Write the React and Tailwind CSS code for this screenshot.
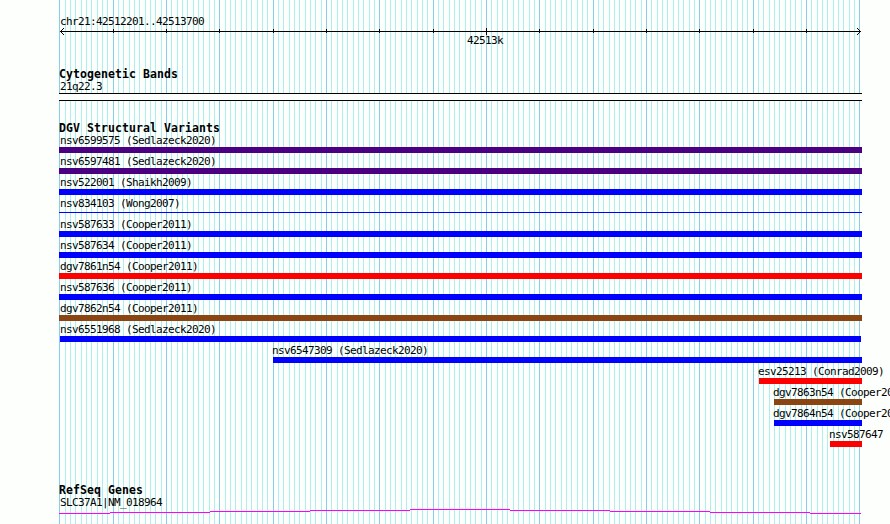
import React from "react";

const variants = [
  { label: "nsv6599575 (Sedlazeck2020)", start: 59, end: 862, color: "bg-[#4b0082]" },
  { label: "nsv6597481 (Sedlazeck2020)", start: 59, end: 862, color: "bg-[#4b0082]" },
  { label: "nsv522001 (Shaikh2009)", start: 59, end: 862, color: "bg-[#0000ff]" },
  { label: "nsv834103 (Wong2007)", start: 59, end: 862, color: "bg-[#0000ff]", thin: true },
  { label: "nsv587633 (Cooper2011)", start: 59, end: 862, color: "bg-[#0000ff]" },
  { label: "nsv587634 (Cooper2011)", start: 59, end: 862, color: "bg-[#0000ff]" },
  { label: "dgv7861n54 (Cooper2011)", start: 59, end: 862, color: "bg-[#ff0000]" },
  { label: "nsv587636 (Cooper2011)", start: 59, end: 862, color: "bg-[#0000ff]" },
  { label: "dgv7862n54 (Cooper2011)", start: 59, end: 862, color: "bg-[#8b4513]" },
  { label: "nsv6551968 (Sedlazeck2020)", start: 60, end: 861, color: "bg-[#0000ff]" },
  { label: "nsv6547309 (Sedlazeck2020)", start: 273, end: 862, color: "bg-[#0000ff]" },
  { label: "esv25213 (Conrad2009)", start: 759, end: 862, color: "bg-[#ff0000]" },
  { label: "dgv7863n54 (Cooper2011)", start: 774, end: 862, color: "bg-[#8b4513]" },
  { label: "dgv7864n54 (Cooper2011)", start: 774, end: 862, color: "bg-[#0000ff]" },
  { label: "nsv587647", start: 830, end: 862, color: "bg-[#ff0000]" },
];

// one grid line every 10 bp, a darker one every 100 bp
const gridLines = Array.from({ length: 151 }, (_, i) => ({
  x: Math.floor(59.7 + (i * 16) / 3),
  major: i % 10 === 0,
}));

const ticks = gridLines.filter((line, i) => line.major && i > 0 && i < 150);

const Label = ({ children, className = "" }) => (
  <div
    className={`h-[15px] whitespace-nowrap font-['DejaVu_Sans_Mono',monospace] text-[11px] leading-[17px] tracking-[-0.623px] ${className}`}
  >
    {children}
  </div>
);

const Title = ({ children }) => (
  <h2 className="h-3 pl-[59px] whitespace-nowrap font-['DejaVu_Sans_Mono',monospace] text-[11.5px] font-bold leading-[15px] tracking-[0.076px]">
    {children}
  </h2>
);

const Grid = () => (
  <svg
    className="absolute inset-0 -z-10"
    width="890"
    height="524"
    shapeRendering="crispEdges"
  >
    {gridLines.map((line) => (
      <rect
        key={line.x}
        x={line.x}
        y="0"
        width="1"
        height="524"
        fill={line.major ? "#87ceeb" : "#afeeee"}
      />
    ))}
  </svg>
);

const Ruler = () => (
  <svg className="block" width="890" height="7" shapeRendering="crispEdges">
    <rect x="60" y="3" width="801" height="1" />
    {ticks.map((tick) => (
      <rect
        key={tick.x}
        x={tick.x}
        y={tick.x === 486 ? 0 : 1}
        width="1"
        height={tick.x === 486 ? 7 : 4}
      />
    ))}
    {[1, 2, 3].map((d) => (
      <g key={d}>
        <rect x={60 + d} y={3 - d} width="1" height="1" />
        <rect x={60 + d} y={3 + d} width="1" height="1" />
        <rect x={860 - d} y={3 - d} width="1" height="1" />
        <rect x={860 - d} y={3 + d} width="1" height="1" />
      </g>
    ))}
  </svg>
);

const Variant = ({ item }) => {
  const labelLeft = item.start < 100 ? 60 : item.start - 1;
  return (
    <div className="h-[21px]">
      <div style={{ marginLeft: labelLeft }}>
        <Label>{item.label}</Label>
      </div>
      <div
        className={`${item.color} ${item.thin ? "h-px translate-y-[2px]" : "h-[6px]"}`}
        style={{ marginLeft: item.start, width: item.end - item.start }}
      />
    </div>
  );
};

const App = () => {
  return (
    <main className="relative isolate h-[524px] w-[890px] overflow-hidden bg-[#fdfffc] text-black">
      <Grid />

      <section className="h-[67px] pt-[13px]">
        <Label className="pl-[60px]">chr21:42512201..42513700</Label>
        <Ruler />
        <Label className="-mt-[3px] pl-[467px]">42513k</Label>
      </section>

      <section className="h-[54px]">
        <Title>Cytogenetic Bands</Title>
        <Label className="-mt-px pl-[60px]">21q22.3</Label>
        <div className="ml-[59px] h-2 w-[803px] border-y border-black bg-[#fdfffc]" />
      </section>

      <section className="h-[362px]">
        <Title>DGV Structural Variants</Title>
        <div className="-mt-px">
          {variants.map((item) => (
            <Variant key={item.label} item={item} />
          ))}
        </div>
      </section>

      <section>
        <Title>RefSeq Genes</Title>
        <Label className="-mt-px pl-[60px]">SLC37A1|NM_018964</Label>
        <svg className="block" width="890" height="15" shapeRendering="crispEdges">
          {[513, 512, 511, 510, 509, 510, 511, 512, 513].map((y, i) => {
            const left = i === 0 ? 59 : 10 + i * 100;
            const right = i === 8 ? 861 : 110 + i * 100;
            return (
              <rect
                key={left}
                x={left}
                y={y - 509}
                width={right - left}
                height="1"
                fill="#ff00ff"
              />
            );
          })}
        </svg>
      </section>
    </main>
  );
};

export default App;
